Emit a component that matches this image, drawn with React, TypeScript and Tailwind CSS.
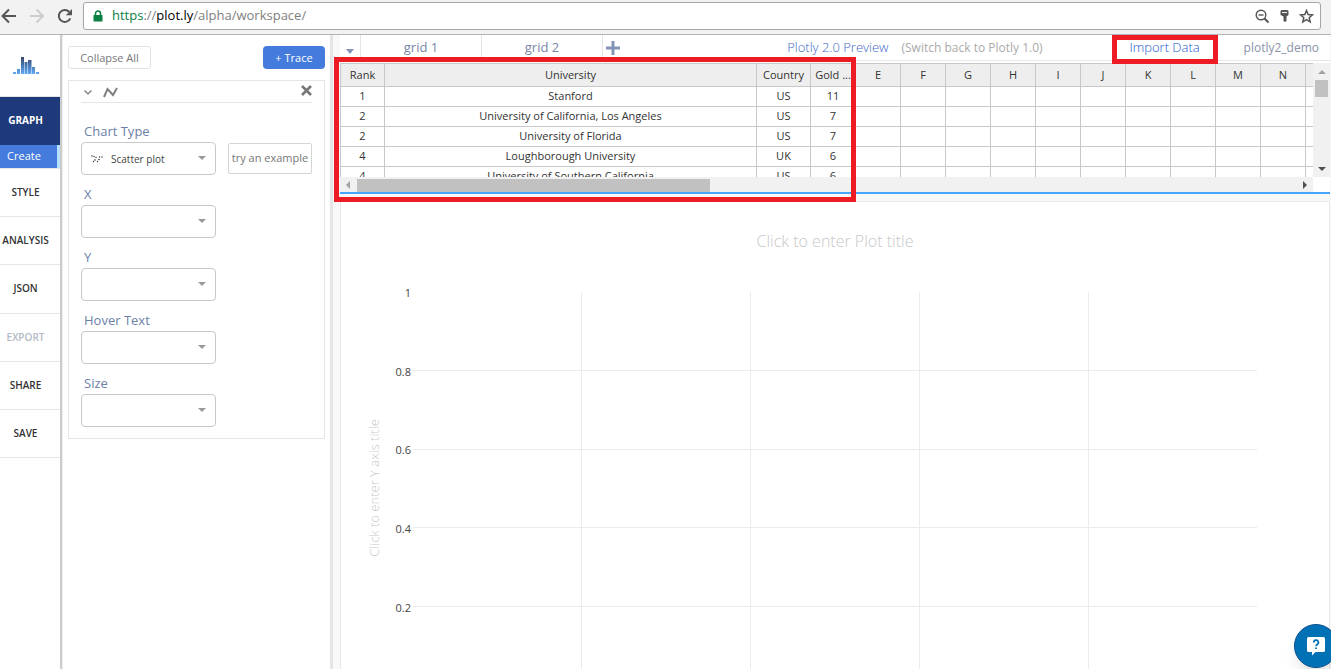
import type { ReactNode } from "react";

const navItems = [
  { label: "STYLE", muted: false },
  { label: "ANALYSIS", muted: false },
  { label: "JSON", muted: false },
  { label: "EXPORT", muted: true },
  { label: "SHARE", muted: false },
  { label: "SAVE", muted: false },
];

const columns = ["Rank", "University", "Country", "Gold ...", "E", "F", "G", "H", "I", "J", "K", "L", "M", "N", ""];

const rows = [
  ["1", "Stanford", "US", "11"],
  ["2", "University of California, Los Angeles", "US", "7"],
  ["2", "University of Florida", "US", "7"],
  ["4", "Loughborough University", "UK", "6"],
  ["4", "University of Southern California", "US", "6"],
];

function BrowserBar() {
  return (
    <header className="flex h-[35px] shrink-0 items-start border-b border-[#b5b3b5] bg-[#f2f2f2] pr-[10px]">
      <div className="flex h-8 w-[83px] shrink-0 items-center">
        <button aria-label="Back" className="w-7">
          <svg width="17" height="16" viewBox="0 0 17 16" fill="none" stroke="#555" strokeWidth="2">
            <path d="M16 8H3M9 1.5 2.5 8 9 14.5" />
          </svg>
        </button>
        <button aria-label="Forward" className="w-7">
          <svg width="17" height="16" viewBox="0 0 17 16" fill="none" stroke="#ccc" strokeWidth="2">
            <path d="M2 8h12M8.500 1.500 15 8 8.500 14.500" />
          </svg>
        </button>
        <button aria-label="Reload">
          <svg width="18" height="16" viewBox="0 0 18 16" fill="none">
            <path d="M14.300 10.300A6 6 0 1 1 13.200 3.800" stroke="#555" strokeWidth="2" />
            <path d="M16 1v6.200h-6.200z" fill="#555" />
          </svg>
        </button>
      </div>
      <div className="mt-[2px] flex h-7 min-w-0 flex-1 items-center rounded-[3px] border border-[#a6a6a6] bg-white pr-[6px] pl-[9px]">
        <svg width="10" height="12" viewBox="0 0 10 12" className="mr-[9px] shrink-0">
          <rect x="0.500" y="5" width="9" height="6.500" rx="0.500" fill="#0b8043" />
          <path d="M2.500 5V3.500a2.500 2.500 0 0 1 5 0V5" fill="none" stroke="#0b8043" strokeWidth="1.500" />
        </svg>
        <div className="flex-1 text-[13px] text-[#808080]">
          <span className="text-[#0b8043]">https</span>://<span className="text-black">plot.ly</span>/alpha/workspace/
        </div>
        <div className="flex items-center gap-2">
          <button aria-label="Zoom">
            <svg width="15" height="15" viewBox="0 0 15 15" fill="none" stroke="#555" strokeWidth="1.400">
              <circle cx="6" cy="6" r="4.800" />
              <path d="M3.500 6h5" />
              <path d="m9.500 9.500 4 4" strokeWidth="2" />
            </svg>
          </button>
          <button aria-label="Saved password" className="px-[2px]">
            <svg width="9" height="14" viewBox="0 0 9 14" fill="#555">
              <path d="M1.500 1h6l1 1v4l-2 1.500V12L4.800 13 3.500 12V7.500L.5 6V2z" />
              <path d="M2 3.500h5" stroke="#f2f2f2" />
            </svg>
          </button>
          <button aria-label="Bookmark">
            <svg width="15" height="15" viewBox="0 0 15 15" fill="none" stroke="#555" strokeWidth="1.500">
              <path d="m7.500 1.500 1.700 4 4.300.4-3.300 2.800 1 4.200-3.700-2.200-3.700 2.200 1-4.200L1.500 5.900l4.300-.4z" />
            </svg>
          </button>
        </div>
      </div>
    </header>
  );
}

function Sidebar() {
  return (
    <nav className="w-[63px] shrink-0 border-r border-[#eee]">
      <div className="h-full border-r-2 border-[#ccc] text-center text-[10px] font-semibold text-[#333]">
        <div className="h-[62px] border-b border-[#e5e5e5] pt-[22px]">
          <svg width="26" height="18" viewBox="0 0 26 18" className="ml-[13px]">
            <defs>
              <linearGradient id="bars" gradientUnits="userSpaceOnUse" x1="0" y1="0" x2="0" y2="17">
                <stop offset="0" stopColor="#3b4a68" />
                <stop offset="0.5" stopColor="#4777b4" />
                <stop offset="1" stopColor="#62aaf8" />
              </linearGradient>
            </defs>
            <path
              fill="url(#bars)"
              d="M0 15h3v2H0zM4 12h3v5H4zM8 0h3v17H8zM11.500 5h3v12h-3zM15 3h3.500v14H15zM19 10h3v7h-3zM23 15h3v2h-3z"
            />
          </svg>
        </div>
        <button className="block h-12 w-full bg-[#1f3a7a] pr-[9px] pb-[1px] font-bold text-white">GRAPH</button>
        <button className="block h-[23px] w-full border-r-3 border-[#b5e0fb] bg-[#447bdc] pr-[9px] text-[11px] font-normal text-white">
          Create
        </button>
        <div className="grid h-[290px] grid-rows-6 border-t border-[#e5e5e5]">
          {navItems.map((item) => (
            <button
              key={item.label}
              className={
                item.muted
                  ? "border-b border-[#e5e5e5] pr-[9px] text-[#b3bac6]"
                  : "border-b border-[#e5e5e5] pr-[9px]"
              }
            >
              {item.label}
            </button>
          ))}
        </div>
      </div>
    </nav>
  );
}

function Field({ id, label, option, icon }: { id: string; label: string; option?: string; icon?: ReactNode }) {
  return (
    <div className="w-[135px]">
      <label htmlFor={id} className="block h-[22px] pl-[3px] text-[13px] leading-[22px] text-[#6b7fa8]">
        {label}
      </label>
      <div className="relative">
        <select
          id={id}
          className="block h-[33px] w-full appearance-none rounded-[4px] border border-[#c8c8c8] bg-white pt-[2px] pl-[29px] text-[10px] text-[#444]"
        >
          <option>{option ?? ""}</option>
        </select>
        {icon}
        <svg width="8" height="4" viewBox="0 0 8 4" className="pointer-events-none absolute top-[14px] right-[10px]">
          <path d="M0 0h8L4 4z" fill="#999" />
        </svg>
      </div>
    </div>
  );
}

function TracePanel() {
  return (
    <aside className="w-[270px] shrink-0 border-r-3 border-[#e5e5e5] pt-[11px] pr-[5px] pl-[5px]">
      <div className="flex justify-between text-[11px]">
        <button className="h-[23px] w-[83px] rounded-[3px] border border-[#e2e2e2] pt-[1px] text-[#777]">Collapse All</button>
        <button className="h-[23px] w-[62px] rounded-[4px] bg-[#447bdc] pt-[1px] text-white">+ Trace</button>
      </div>
      <section className="mt-[11px] border border-[#e5e5e5] px-3 pb-[11px]">
        <div className="flex h-[22px] items-center border-b border-[#e5e5e5]">
          <button aria-label="Collapse trace" className="mr-[11px] ml-[3px] pt-[2px]">
            <svg width="8" height="5" viewBox="0 0 8 5" fill="none" stroke="#777" strokeWidth="1.200">
              <path d="m.5.5 3.500 3.500L7.500.5" />
            </svg>
          </button>
          <svg width="15" height="12" viewBox="0 0 15 12" fill="none" stroke="#808080" strokeWidth="2">
            <path d="M1 11 4.500 3l5.500 6L14 2" />
          </svg>
          <button aria-label="Remove trace" className="mb-[2px] ml-auto">
            <svg width="11" height="11" viewBox="0 0 11 11" stroke="#777" strokeWidth="2.600">
              <path d="m1 1 9 9M10 1l-9 9" />
            </svg>
          </button>
        </div>
        <div className="mt-[17px] flex flex-col gap-2">
          <div className="flex items-end justify-between">
            <Field
              id="chart-type"
              label="Chart Type"
              option="Scatter plot"
              icon={
                <svg width="12" height="8" viewBox="0 0 12 8" className="pointer-events-none absolute top-[13px] left-[10px]">
                  <g fill="#333">
                    <circle cx="1" cy="1" r="0.700" />
                    <circle cx="3" cy="1.500" r="0.700" />
                    <circle cx="2.500" cy="6.500" r="0.700" />
                    <circle cx="4" cy="5" r="0.800" />
                    <circle cx="5" cy="2.500" r="0.700" />
                    <circle cx="6.500" cy="6.500" r="0.700" />
                    <circle cx="8" cy="4.500" r="0.800" />
                    <circle cx="8.500" cy="2" r="0.700" />
                    <circle cx="11" cy="2" r="0.700" />
                  </g>
                </svg>
              }
            />
            <button className="mb-[1px] h-[31px] w-[84px] rounded-[2px] border border-[#d5d5d5] text-[11px] whitespace-nowrap text-[#777]">
              try an example
            </button>
          </div>
          <Field id="x" label="X" />
          <Field id="y" label="Y" />
          <Field id="hover-text" label="Hover Text" />
          <Field id="size" label="Size" />
        </div>
      </section>
    </aside>
  );
}

function TopBar() {
  return (
    <div className="flex h-[26px] items-center border-b border-[#e5e5e5] text-[13px] text-[#7685a8]">
      <button aria-label="Grid list" className="flex h-full w-[21px] items-end justify-center border-r border-[#e5e5e5] pb-[6px]">
        <svg width="8" height="5" viewBox="0 0 8 5">
          <path d="M0 0h8L4 5z" fill="#8494b8" />
        </svg>
      </button>
      <button className="h-full w-[121px] border-r border-[#e5e5e5]">grid 1</button>
      <button className="h-full w-[121px] border-r border-[#e5e5e5]">grid 2</button>
      <button aria-label="Add grid" className="ml-[3px]">
        <svg width="14" height="14" viewBox="0 0 14 14">
          <path d="M5.500 0h3v5.500H14v3H8.500V14h-3V8.500H0v-3h5.500z" fill="#8494b8" />
        </svg>
      </button>
      <div className="ml-auto flex h-full items-center whitespace-nowrap">
        <a href="#preview" className="mr-[13px] font-light text-[#3c68c8]">Plotly 2.0 Preview</a>
        <a href="#classic" className="mr-[69px] text-[12px] text-[#aaa]">(Switch back to Plotly 1.0)</a>
        <a href="#import" className="relative mr-[26px] flex h-full w-[106px] items-center justify-center font-light text-[#2458d0]">
          Import Data
          <span className="absolute inset-x-0 top-0 -bottom-[4px] border-5 border-[#ed1c24]" />
        </a>
        <a href="#account" className="mr-[11px] text-[12px] text-[#8a93a8]">plotly2_demo</a>
      </div>
    </div>
  );
}

function DataGrid() {
  return (
    <div className="mt-[2px] border-b-2 border-[#45a5f8]">
      <div className="flex h-[114px]">
        <div className="min-w-0 flex-1 overflow-hidden">
          <table className="w-[1011px] table-fixed border-separate border-spacing-0 border-t border-l border-[#c8c8c8] text-center text-[11px] text-[#333]">
            <colgroup>
              <col className="w-[44px]" />
              <col className="w-[372px]" />
              <col className="w-[54px]" />
              {columns.slice(3).map((_, i) => (
                <col key={i} className="w-[45px]" />
              ))}
            </colgroup>
            <thead>
              <tr>
                {columns.map((name, i) => (
                  <th
                    key={i}
                    className="h-[23px] border-r border-b border-[#c8c8c8] bg-[#eee] p-0 align-top leading-[21px] font-normal whitespace-nowrap"
                  >
                    {name}
                  </th>
                ))}
              </tr>
            </thead>
            <tbody>
              {rows.map((row, r) => (
                <tr key={r}>
                  {columns.map((_, c) => (
                    <td key={c} className="h-5 border-r border-b border-[#c8c8c8] p-0 align-top leading-[17px]">
                      {row[c] ?? ""}
                    </td>
                  ))}
                </tr>
              ))}
            </tbody>
          </table>
        </div>
        <div className="flex w-[17px] shrink-0 flex-col items-center bg-[#f1f1f1] pt-[7px] pb-[6px]">
          <svg width="8" height="4" viewBox="0 0 8 4">
            <path d="M0 4h8L4 0z" fill="#a3a3a3" />
          </svg>
          <div className="mt-[6px] h-[17px] w-[13px] bg-[#c1c1c1]" />
          <svg width="8" height="4" viewBox="0 0 8 4" className="mt-auto">
            <path d="M0 0h8L4 4z" fill="#505050" />
          </svg>
        </div>
      </div>
      <div className="mr-[17px] flex h-[15px] items-center bg-[#f1f1f1] pr-[6px] pl-[6px]">
        <svg width="4" height="8" viewBox="0 0 4 8">
          <path d="M4 0v8L0 4z" fill="#a3a3a3" />
        </svg>
        <div className="mt-[2px] ml-[7px] h-[13px] w-[353px] bg-[#c1c1c1]" />
        <svg width="4" height="8" viewBox="0 0 4 8" className="ml-auto">
          <path d="M0 0v8l4-4z" fill="#505050" />
        </svg>
      </div>
    </div>
  );
}

function Plot() {
  const ticks = ["1", "0.8", "0.6", "0.4", "0.2", "0"];
  return (
    <div className="mt-[7px] min-h-0 flex-1 overflow-hidden border border-b-0 border-[#e8e8e8] bg-white">
      <svg width="988" height="520" viewBox="0 0 988 520" className="mx-auto" shapeRendering="crispEdges">
        <text x="494" y="45" fontSize="16" fontWeight="300" textAnchor="middle" fill="#c8c8c8">
          Click to enter Plot title
        </text>
        <text transform="translate(38 286) rotate(-90)" fontSize="13" fontWeight="300" textAnchor="middle" fill="#c8c8c8">
          Click to enter Y axis title
        </text>
        <g stroke="#ebebeb">
          {[168.5, 247.5, 325.5, 404.5].map((y) => (
            <path key={y} d={`M72 ${y}H916`} />
          ))}
          {[240.5, 409.5, 578.5, 747.5].map((x) => (
            <path key={x} d={`M${x} 90V520`} />
          ))}
        </g>
        <g fontSize="11" fill="#444" textAnchor="end">
          {ticks.map((tick, i) => (
            <text key={tick} x="70" y={Math.round(95 + i * 78.7)}>
              {tick}
            </text>
          ))}
        </g>
      </svg>
    </div>
  );
}

export default function App() {
  return (
    <div className="flex h-screen flex-col overflow-hidden bg-white font-['Open_Sans',sans-serif]">
      <BrowserBar />
      <div className="flex min-h-0 flex-1">
        <Sidebar />
        <TracePanel />
        <main className="relative flex min-w-0 flex-1 flex-col bg-[#f8f8f8] pr-[1px] pl-[7px]">
          <div className="bg-white">
            <TopBar />
            <DataGrid />
          </div>
          <Plot />
          <div className="pointer-events-none absolute top-[22px] left-[1px] h-[145px] w-[522px] border-5 border-[#ed1c24]" />
        </main>
      </div>
      <button
        aria-label="Help"
        className="fixed -right-[7px] bottom-[1px] flex size-[44px] items-center rounded-full border border-[#0a4f8f] bg-[#0071b5] pl-[11px] shadow-lg"
      >
        <svg width="20" height="20" viewBox="0 0 20 20">
          <path d="M2.500 1h15A1.500 1.500 0 0 1 19 2.500v12a1.500 1.500 0 0 1-1.500 1.500H9.500L6 19.500V16H2.500A1.500 1.500 0 0 1 1 14.500v-12A1.500 1.500 0 0 1 2.500 1z" fill="#fff" />
          <path d="M7.800 6.500a2.300 2.300 0 1 1 3.300 2c-.8.5-1 .9-1 1.700M10.100 11.500v1.600" fill="none" stroke="#0071b5" strokeWidth="1.700" />
        </svg>
      </button>
    </div>
  );
}
